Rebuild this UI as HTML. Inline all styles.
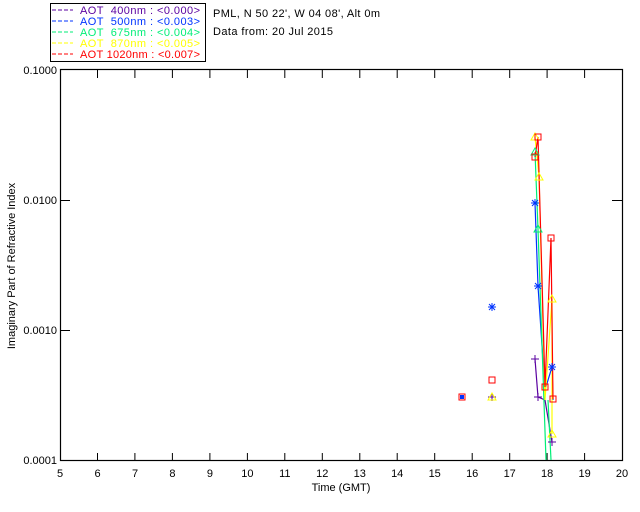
<!DOCTYPE html>
<html><head><meta charset="utf-8"><style>
html,body{margin:0;padding:0;background:#fff;width:640px;height:512px;overflow:hidden}
svg{display:block}
text{font-family:"Liberation Sans",sans-serif;font-size:11px}
</style></head><body>
<svg width="640" height="512" viewBox="0 0 640 512" xmlns="http://www.w3.org/2000/svg">
<rect x="50.5" y="3.5" width="155" height="58" fill="#fff" stroke="#000"/>
<g stroke-dasharray="4,2" stroke-width="1">
<line x1="52" y1="10" x2="73" y2="10" stroke="#5a00a0"/>
<line x1="52" y1="21" x2="73" y2="21" stroke="#0033ff"/>
<line x1="52" y1="32" x2="73" y2="32" stroke="#00ee77"/>
<line x1="52" y1="43" x2="73" y2="43" stroke="#ffff00"/>
<line x1="52" y1="54" x2="73" y2="54" stroke="#ff0000"/>
</g>
<text x="80" y="14" fill="#5a00a0" xml:space="preserve" textLength="120" lengthAdjust="spacing">AOT  400nm : &lt;0.000&gt;</text>
<text x="80" y="25" fill="#0033ff" xml:space="preserve" textLength="120" lengthAdjust="spacing">AOT  500nm : &lt;0.003&gt;</text>
<text x="80" y="36" fill="#00ee77" xml:space="preserve" textLength="120" lengthAdjust="spacing">AOT  675nm : &lt;0.004&gt;</text>
<text x="80" y="47" fill="#ffff00" xml:space="preserve" textLength="120" lengthAdjust="spacing">AOT  870nm : &lt;0.005&gt;</text>
<text x="80" y="58" fill="#ff0000" xml:space="preserve" textLength="120" lengthAdjust="spacing">AOT 1020nm : &lt;0.007&gt;</text>
<text x="213" y="17" fill="#000" textLength="167" lengthAdjust="spacing">PML, N 50 22', W 04 08', Alt 0m</text>
<text x="213" y="35" fill="#000" textLength="120" lengthAdjust="spacing">Data from: 20 Jul 2015</text>

<rect x="60.5" y="69.5" width="562" height="391" fill="none" stroke="#000" stroke-width="1.2"/>
<g stroke="#000">
<path d="M97.5 461v-8M134.9 461v-8M172.4 461v-8M209.9 461v-8M247.4 461v-8M284.8 461v-8M322.3 461v-8M359.8 461v-8M397.2 461v-8M434.7 461v-8M472.2 461v-8M509.7 461v-8M547.1 461v-8M584.6 461v-8"/>
<path d="M97.5 70v8M134.9 70v8M172.4 70v8M209.9 70v8M247.4 70v8M284.8 70v8M322.3 70v8M359.8 70v8M397.2 70v8M434.7 70v8M472.2 70v8M509.7 70v8M547.1 70v8M584.6 70v8"/>
<path d="M60 200.5h10M60 330.5h10M622 200.5h-10M622 330.5h-10"/>
</g>
<g text-anchor="end" fill="#000">
<text x="57" y="74">0.1000</text>
<text x="57" y="204">0.0100</text>
<text x="57" y="334">0.0010</text>
<text x="57" y="464">0.0001</text>
</g>
<g text-anchor="middle" fill="#000">
<text x="60" y="477">5</text><text x="97.5" y="477">6</text><text x="135" y="477">7</text><text x="172.4" y="477">8</text><text x="209.9" y="477">9</text><text x="247.4" y="477">10</text><text x="284.8" y="477">11</text><text x="322.3" y="477">12</text><text x="359.8" y="477">13</text><text x="397.2" y="477">14</text><text x="434.7" y="477">15</text><text x="472.2" y="477">16</text><text x="509.7" y="477">17</text><text x="547.1" y="477">18</text><text x="584.6" y="477">19</text><text x="622" y="477">20</text>
<text x="341" y="491">Time (GMT)</text>
<text transform="translate(15,266) rotate(-90)">Imaginary Part of Refractive Index</text>
</g>

<g fill="none" stroke-width="1.2">
<polyline stroke="#5a00a0" points="535,359 538,397 545,400 552,442"/>
<polyline stroke="#0033ff" points="535,203 538,286 545,390 552,367 553,400"/>
<polyline stroke="#00ee77" points="535,152 538,229 546,460"/>
<polyline stroke="#00ee77" points="548,400 551,460"/>
<polyline stroke="#ffff00" points="535,137 539,177 545,400 552,299 552,434"/>
<polyline stroke="#ff0000" points="535,157 538,137 545,387 551,238 553,399"/>
</g>
<g fill="none" stroke-width="1">
<path stroke="#5a00a0" d="M531 359h8M535 355v8M534 397h8M538 393v8M548 442h8M552 438v8M488 397h8M492 393v8"/>
<path stroke="#0033ff" d="M531 203h8M535 199v8M532 200l6 6M538 200l-6 6 M534 286h8M538 282v8M535 283l6 6M541 283l-6 6 M548 367h8M552 363v8M549 364l6 6M555 364l-6 6 M488 307h8M492 303v8M489 304l6 6M495 304l-6 6"/>
<path stroke="#ffff00" d="M535 133l-4 7h8z M539 173l-4 7h8z M552 295l-4 7h8z M552 430l-4 7h8z M492 393l-4 7h8z"/>
<path stroke="#00ee77" d="M535 148l-4 7h8z M538 225l-4 7h8z"/>
<path stroke="#ff0000" d="M535 134h6v6h-6z M532 154h6v6h-6z M548 235h6v6h-6z M542 384h6v6h-6z M550 396h6v6h-6z M489 377h6v6h-6z M459 394h6v6h-6z"/>
</g>
<rect x="460" y="395" width="4" height="4" fill="#0033ff"/>
</svg>
</body></html>
